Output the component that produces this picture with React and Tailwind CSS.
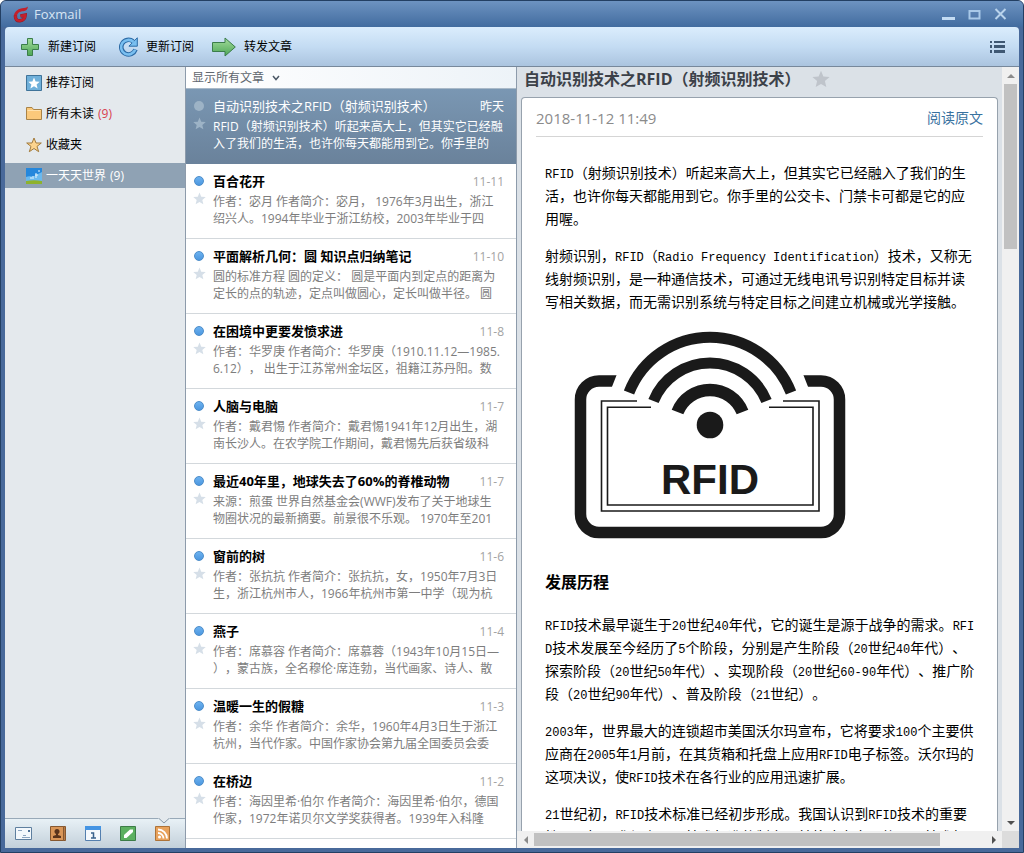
import { useState } from "react";

const folders = [
  { id: "recommend", name: "推荐订阅" },
  { id: "unread", name: "所有未读", count: 9, alert: true },
  { id: "favorite", name: "收藏夹" },
  { id: "world", name: "一天天世界", count: 9 },
];

const articles = [
  {
    title: "自动识别技术之RFID（射频识别技术）",
    date: "昨天",
    lines: ["RFID（射频识别技术）听起来高大上，但其实它已经融", "入了我们的生活，也许你每天都能用到它。你手里的"],
  },
  {
    title: "百合花开",
    date: "11-11",
    lines: ["作者：宓月 作者简介：宓月， 1976年3月出生，浙江", "绍兴人。1994年毕业于浙江纺校，2003年毕业于四"],
  },
  {
    title: "平面解析几何：圆 知识点归纳笔记",
    date: "11-10",
    lines: ["圆的标准方程 圆的定义： 圆是平面内到定点的距离为", "定长的点的轨迹，定点叫做圆心，定长叫做半径。 圆"],
  },
  {
    title: "在困境中更要发愤求进",
    date: "11-8",
    lines: ["作者：华罗庚 作者简介：华罗庚（1910.11.12—1985.", "6.12）， 出生于江苏常州金坛区，祖籍江苏丹阳。数"],
  },
  {
    title: "人脑与电脑",
    date: "11-7",
    lines: ["作者：戴君惕 作者简介：戴君惕1941年12月出生，湖", "南长沙人。在农学院工作期间，戴君惕先后获省级科"],
  },
  {
    title: "最近40年里，地球失去了60%的脊椎动物",
    date: "11-7",
    lines: ["来源：煎蛋 世界自然基金会(WWF)发布了关于地球生", "物圈状况的最新摘要。前景很不乐观。 1970年至201"],
  },
  {
    title: "窗前的树",
    date: "11-6",
    lines: ["作者：张抗抗 作者简介：张抗抗，女，1950年7月3日", "生，浙江杭州市人，1966年杭州市第一中学（现为杭"],
  },
  {
    title: "燕子",
    date: "11-4",
    lines: ["作者：席慕容 作者简介：席慕蓉（1943年10月15日—", "），蒙古族，全名穆伦·席连勃，当代画家、诗人、散"],
  },
  {
    title: "温暖一生的假糖",
    date: "11-3",
    lines: ["作者：余华 作者简介：余华，1960年4月3日生于浙江", "杭州，当代作家。中国作家协会第九届全国委员会委"],
  },
  {
    title: "在桥边",
    date: "11-2",
    lines: ["作者：海因里希·伯尔 作者简介：海因里希·伯尔，德国", "作家，1972年诺贝尔文学奖获得者。1939年入科隆"],
  },
];

const intro = [
  [
    "RFID（射频识别技术）听起来高大上，但其实它已经融入了我们的生",
    "活，也许你每天都能用到它。你手里的公交卡、门禁卡可都是它的应",
    "用喔。",
  ],
  [
    "射频识别，RFID（Radio Frequency Identification）技术，又称无",
    "线射频识别，是一种通信技术，可通过无线电讯号识别特定目标并读",
    "写相关数据，而无需识别系统与特定目标之间建立机械或光学接触。",
  ],
];

const history = [
  [
    "RFID技术最早诞生于20世纪40年代，它的诞生是源于战争的需求。RFI",
    "D技术发展至今经历了5个阶段，分别是产生阶段（20世纪40年代）、",
    "探索阶段（20世纪50年代）、实现阶段（20世纪60-90年代）、推广阶",
    "段（20世纪90年代）、普及阶段（21世纪）。",
  ],
  [
    "2003年，世界最大的连锁超市美国沃尔玛宣布，它将要求100个主要供",
    "应商在2005年1月前，在其货箱和托盘上应用RFID电子标签。沃尔玛的",
    "这项决议，使RFID技术在各行业的应用迅速扩展。",
  ],
  [
    "21世纪初，RFID技术标准已经初步形成。我国认识到RFID技术的重要",
    "性，国标要求与中RFID技术标准的制定，并将建立自己的RFID技术标",
  ],
];

const Star = ({ className }) => (
  <svg viewBox="0 0 24 24" className={className} fill="currentColor" aria-hidden="true">
    <path d="M12 1l3.2 7.6 8.3.7-6.3 5.4 1.9 8.1L12 18.500l-7.100 4.300 1.900-8.100L.5 9.300l8.300-.7z" />
  </svg>
);

const Logo = () => (
  <svg width="16" height="17" viewBox="0 0 16 17" fill="none" aria-hidden="true">
    <path d="M15 .5C13.500 2 12 2 9 2.300 4 3 .8 6.500.8 11L4 10C4.500 6.500 7 5.500 10.500 5.300 13 5 14.500 3.500 15 .5z" fill="#c3202b" />
    <path d="M2.500 9.500C2 13.500 4 15 7 14.700c3-.2 5-2 5.200-5.700L7.500 10" stroke="#8c1c2b" strokeWidth="3.400" />
    <path d="M2.500 9.500C2 13.500 4 15 7 14.700c3-.2 5-2 5.200-5.700L7.500 10" stroke="#c3202b" strokeWidth="2.600" />
  </svg>
);

const PlusIcon = () => (
  <svg width="20" height="20" viewBox="0 0 20 20" aria-hidden="true">
    <defs>
      <linearGradient id="green" x1="0" y1="0" x2="0" y2="1">
        <stop offset="0" stopColor="#a3dc9c" />
        <stop offset="1" stopColor="#4da656" />
      </linearGradient>
    </defs>
    <path d="M7.500 1.500h5v6h6v5h-6v6h-5v-6h-6v-5h6z" fill="url(#green)" stroke="#3b7d4a" />
  </svg>
);

const RefreshIcon = () => (
  <svg width="20" height="20" viewBox="0 0 20 20" fill="none" aria-hidden="true">
    <path d="M17.500 12.500A7.300 7.300 0 1 1 15 4.300" stroke="#2c6ba6" strokeWidth="4.600" />
    <path d="M19.300.8v8.400h-8.400z" fill="#79bff0" stroke="#2c6ba6" />
    <path d="M17.200 12.800A7.300 7.300 0 1 1 15.500 5" stroke="#79bff0" strokeWidth="2.600" />
  </svg>
);

const ForwardIcon = () => (
  <svg width="24" height="20" viewBox="0 0 24 20" aria-hidden="true">
    <path d="M.5 5.500h12.500V1L23.300 10 13 19V14.500H.5z" fill="url(#green)" stroke="#3b7d4a" />
  </svg>
);

const FolderIcon = ({ id }) => (
  <svg width="16" height="16" viewBox="0 0 16 16" className="shrink-0" aria-hidden="true">
    {id === "recommend" && (
      <>
        <path d="M.5.5h15v15H.5z" fill="#6fb0da" stroke="#3f7399" />
        <path d="M8 2.500l1.600 3.900 4.100.3-3.100 2.700 1 4.100L8 11.300l-3.600 2.200 1-4.100-3.100-2.700 4.100-.3z" fill="#fff" />
      </>
    )}
    {id === "unread" && (
      <>
        <path d="M.5 13.500v-12h5.500l1.500 2h8v10z" fill="#fbc97b" stroke="#a98347" />
        <path d="M1.500 4.500h13" stroke="#ffe2ae" />
      </>
    )}
    {id === "favorite" && (
      <path d="M8 1l2 5h5.300L11 9.400l1.700 5.300L8 11.500l-4.700 3.200L5 9.400.7 6H6z" fill="#fcd48e" stroke="#a17a3c" />
    )}
    {id === "world" && (
      <>
        <path d="M0 0h16v16H0z" fill="#2587dc" />
        <path d="M0 9c4-2 6 1 10-2l6-3v9H0z" fill="#6bb9ee" />
        <path d="M0 13c5-1 11-1 16 0v3H0z" fill="#8eb22c" />
        <path d="M4 10h2M7 8v3M10 5v5M9 7h3M12 3h2" stroke="#e8f6ff" fill="none" />
      </>
    )}
  </svg>
);

const modules = ["邮件", "联系人", "日程", "记事", "订阅"];

const ModuleIcon = ({ name }) => (
  <svg width="18" height="16" viewBox="0 0 18 16" aria-hidden="true">
    {name === "邮件" && (
      <>
        <path d="M.5 1.500h16v12H.5z" fill="#f3f8fc" stroke="#5e7f9f" />
        <path d="M3 4.500h4M8 9.500h3M7 11.500h8" stroke="#8aa4bf" />
        <path d="M13 4h2v2h-2z" fill="#4e7195" />
      </>
    )}
    {name === "联系人" && (
      <>
        <path d="M.5.5h13v14H.5z" fill="#d99658" stroke="#865830" />
        <path d="M13.500.5h2v14h-2z" fill="#b87a45" stroke="#865830" />
        <circle cx="7" cy="5.500" r="2.500" fill="#59331b" />
        <path d="M3 12V10l3-1V7h2v2l3 1v2z" fill="#59331b" />
      </>
    )}
    {name === "日程" && (
      <>
        <path d="M.5.5h15v14H.5z" fill="#f5f9fd" stroke="#547fae" />
        <path d="M0 0h16v4H0z" fill="#4494e3" />
        <path d="M6 7h2.500v5M6 12h5" stroke="#39628c" strokeWidth="1.500" fill="none" />
      </>
    )}
    {name === "记事" && (
      <>
        <path d="M.5.5h15v14H.5z" fill="#5cb060" stroke="#3c7c47" />
        <path d="M4 12V9l6-5.500h3v2.500L6.500 12z" fill="#fff" />
      </>
    )}
    {name === "订阅" && (
      <>
        <path d="M.5.5h14v14H.5z" fill="#e8a25c" stroke="#ad7339" />
        <circle cx="4.500" cy="11" r="1.500" fill="#fff" />
        <path d="M3 7a5.500 5.500 0 0 1 5.500 5.500M3 3.500a9 9 0 0 1 9 9" stroke="#fff" strokeWidth="1.800" fill="none" />
      </>
    )}
  </svg>
);

const RfidPicture = () => (
  <svg width="309" height="220" viewBox="1 6 309 220" className="ml-4 mt-3 block" fill="none" stroke="#1a1a1a" role="img" aria-label="RFID">
    <path d="M57 60H39a18.500 18.500 0 0 0-18.500 18.500V193A18.500 18.500 0 0 0 39 211.500H261a18.500 18.500 0 0 0 18.500-18.500V78.500A18.500 18.500 0 0 0 261 60H243" strokeWidth="11.500" />
    <path d="M57 53L51.500 67H59V53zM243 53l5.500 14H241V53z" fill="#fff" stroke="none" />
    <path d="M69 71.500A87 87 0 0 1 231 71.500" strokeWidth="11" />
    <path d="M93.500 80A61 61 0 0 1 206.500 80" strokeWidth="11" />
    <path d="M117.500 91A35 35 0 0 1 182.500 91" strokeWidth="12.500" />
    <circle cx="150" cy="104" r="13.300" fill="#1a1a1a" stroke="none" />
    <path d="M77 80H41.500V190H259V80H223M91 86.300H47.500V184H253V86.300H209" strokeWidth="1.600" />
    <text x="150" y="173" textAnchor="middle" fill="#1a1a1a" stroke="none" className="font-['Liberation_Sans',sans-serif] text-[42px] font-bold">
      RFID
    </text>
  </svg>
);

// Latin runs are set in a half-width face so they line up with the CJK grid
const Paragraph = ({ lines }) => (
  <p className="mb-[14px]">
    {lines.map((line) => (
      <span key={line} className="block whitespace-nowrap">
        {line.split(/([\x20-\x7e]+)/).map((part, i) =>
          i % 2 ? (
            <span key={i} className="font-['Liberation_Mono',monospace] text-[12px] leading-none">
              {part}
            </span>
          ) : (
            part
          )
        )}
      </span>
    ))}
  </p>
);

function Sidebar({ active, onSelect }) {
  return (
    <aside className="flex w-[181px] shrink-0 flex-col border-r border-[#8d9bab] bg-[#e4e9ed]">
      <nav className="flex flex-1 flex-col gap-[6px] pt-[3px]">
        {folders.map((folder) => (
          <button
            key={folder.id}
            onClick={() => onSelect(folder.id)}
            className={`flex h-[25px] items-center gap-1 pl-[21px] text-left ${
              active === folder.id ? "bg-[#8fa2b4] text-white" : "text-black"
            }`}
          >
            <FolderIcon id={folder.id} />
            <span>{folder.name}</span>
            {folder.count && <span className={folder.alert ? "text-[#d8404e]" : ""}>({folder.count})</span>}
          </button>
        ))}
      </nav>
      <div className="relative flex h-[30px] items-center gap-[17px] border-t border-[#98a9b8] bg-linear-to-b from-[#e8f1f6] to-[#c3d0da] pl-[10px]">
        {modules.map((name) => (
          <button key={name} aria-label={name}>
            <ModuleIcon name={name} />
          </button>
        ))}
        <svg width="12" height="6" viewBox="0 0 12 6" className="absolute -top-px left-[153px]" aria-hidden="true">
          <path d="M0 0h12L6 5z" fill="#e4e9ed" />
          <path d="M1 .5l5 4.500 5-4.500" fill="none" stroke="#8496a7" />
        </svg>
      </div>
    </aside>
  );
}

function ArticleList({ active, onSelect }) {
  return (
    <section className="flex w-[331px] shrink-0 flex-col border-r border-[#8d9bab] bg-white">
      <button className="flex h-[22px] shrink-0 items-center gap-2 border-b border-[#a9b9c8] bg-linear-to-r from-white to-[#edf3f8] pl-[6px] text-[#5f666e]">
        显示所有文章
        <svg width="8" height="6" viewBox="0 0 8 6" fill="none" stroke="#4c5866" strokeWidth="1.500" aria-hidden="true">
          <path d="M1 1l3 3.500L7 1" />
        </svg>
      </button>
      <ul className="min-h-0 flex-1 overflow-hidden">
        {articles.map((item, index) => {
          const selected = index === active;
          return (
            <li key={item.title} className={`border-b ${selected ? "border-[#6a829b]" : "border-[#d3d8dc]"}`}>
              <button
                onClick={() => onSelect(index)}
                className={`flex h-[74px] w-full gap-2 pl-[7px] pr-3 pt-[7px] text-left ${
                  selected ? "bg-linear-to-b from-[#7a97b3] to-[#6a829b] text-white" : "text-[#7d7d7d]"
                }`}
              >
                <span className="flex w-3 shrink-0 flex-col items-center gap-[6px] pt-[5px]">
                  <span
                    className={`size-[10px] rounded-full ${
                      selected ? "bg-[#9db3c6]" : "border border-[#4b8cc9] bg-linear-to-b from-[#6db2f0] to-[#4c97df]"
                    }`}
                  />
                  <Star className={`size-[13px] ${selected ? "text-[#9db3c6]" : "text-[#d6dfe8]"}`} />
                </span>
                <span className="min-w-0 flex-1 whitespace-nowrap leading-[17px]">
                  <span className="mb-[2px] flex h-5 items-center justify-between">
                    <span className={`text-[13px] ${selected ? "" : "font-bold text-black"}`}>{item.title}</span>
                    <span className={selected ? "" : "text-[#a3a3a3]"}>{item.date}</span>
                  </span>
                  {item.lines.map((line) => (
                    <span key={line} className="block">
                      {line}
                    </span>
                  ))}
                </span>
              </button>
            </li>
          );
        })}
      </ul>
    </section>
  );
}

function Reader() {
  return (
    <section className="flex min-w-0 flex-1 flex-col bg-[#dbe1e7]">
      <div className="flex min-h-0 flex-1">
        <div className="flex min-w-0 flex-1 flex-col overflow-hidden pl-1 pr-1">
          <header className="flex h-[30px] shrink-0 items-center gap-[11px] pb-[6px] pl-[3px]">
            <h1 className="whitespace-nowrap text-[16px] font-bold text-[#3c4149]">
              自动识别技术之RFID（射频识别技术）
            </h1>
            <button aria-label="收藏">
              <Star className="size-[18px] text-[#bfc4cb]" />
            </button>
          </header>
          <article className="min-h-0 flex-1 overflow-hidden rounded-t-sm border border-b-0 border-[#97a2ad] bg-white px-[14px]">
            <div className="flex h-[39px] items-center justify-between border-b border-[#d5d5d5] pt-[2px]">
              <time className="text-[15px] text-[#8b8b8b]">2018-11-12 11:49</time>
              <a href="#original" className="text-[14px] text-[#39729f]">
                阅读原文
              </a>
            </div>
            <div className="pl-[9px] pt-6 text-[14px] leading-[23px] text-black">
              {intro.map((lines) => (
                <Paragraph key={lines[0]} lines={lines} />
              ))}
              <RfidPicture />
              <h2 className="mb-[19px] mt-6 text-[16px] font-bold">发展历程</h2>
              {history.map((lines) => (
                <Paragraph key={lines[0]} lines={lines} />
              ))}
            </div>
          </article>
        </div>
        <div className="flex w-[17px] shrink-0 flex-col items-center bg-[#f0f0f0]">
          <span className="flex h-[17px] items-center">
            <span className="border-x-4 border-b-4 border-x-transparent border-b-[#8b8b8b]" />
          </span>
          <span className="h-[165px] w-[13px] bg-[#c1c1c1]" />
          <span className="mt-auto flex h-[17px] items-center">
            <span className="border-x-4 border-t-4 border-x-transparent border-t-[#505050]" />
          </span>
        </div>
      </div>
      <div className="flex h-[17px] shrink-0">
        <div className="flex flex-1 items-center bg-[#f0f0f0]">
          <span className="flex w-[17px] justify-center">
            <span className="border-y-4 border-r-4 border-y-transparent border-r-[#8b8b8b]" />
          </span>
          <span className="flex-1">
            <span className="block h-[13px] w-9/10 bg-[#c1c1c1]" />
          </span>
          <span className="flex w-[17px] justify-center">
            <span className="border-y-4 border-l-4 border-y-transparent border-l-[#505050]" />
          </span>
        </div>
        <div className="w-[17px] bg-[#dcdcdc]" />
      </div>
    </section>
  );
}

function App() {
  const [folder, setFolder] = useState("world");
  const [article, setArticle] = useState(0);

  return (
    <main className="flex h-screen flex-col overflow-hidden rounded-t-md border border-[#233f63] bg-[#48699a] px-1 pb-1 font-['Open_Sans','Noto_Sans_CJK_SC',sans-serif] text-[12px] leading-4 [text-spacing-trim:space-all]">
      <header className="-mx-1 flex h-[26px] shrink-0 items-center bg-linear-to-b from-[#6d93c1] to-[#426c9f] pl-3 pr-4 text-[#d7e5f4]">
        <Logo />
        <span className="ml-[5px] text-[13px]">Foxmail</span>
        <div className="ml-auto flex items-center gap-[13px]">
          <button aria-label="最小化">
            <svg width="13" height="12" viewBox="0 0 13 12" aria-hidden="true">
              <path d="M0 9h13v3H0z" fill="#c4dcf3" />
            </svg>
          </button>
          <button aria-label="最大化">
            <svg width="13" height="12" viewBox="0 0 13 12" aria-hidden="true">
              <path d="M1.500 3h10v7.500h-10z" fill="none" stroke="#a9c9e8" strokeWidth="2" />
            </svg>
          </button>
          <button aria-label="关闭">
            <svg width="13" height="12" viewBox="0 0 13 12" aria-hidden="true">
              <path d="M1.500 1l10 10M11.500 1l-10 10" stroke="#b9d3ec" strokeWidth="2" />
            </svg>
          </button>
        </div>
      </header>

      <div className="flex h-10 shrink-0 items-center rounded-t-sm border-b border-[#77889b] bg-linear-to-b from-[#dbedfc] via-[#c4dcf3] to-[#abc4df] pl-[15px] pr-[13px] text-black">
        <button className="flex items-center gap-2">
          <PlusIcon />
          新建订阅
        </button>
        <button className="ml-[22px] flex items-center gap-2">
          <RefreshIcon />
          更新订阅
        </button>
        <button className="ml-[18px] flex items-center gap-2">
          <ForwardIcon />
          转发文章
        </button>
        <button className="ml-auto" aria-label="菜单">
          <svg width="17" height="13" viewBox="0 0 17 13" fill="#3f5873" aria-hidden="true">
            <path d="M1 1h2v2H1zM5 1h11v2H5zM1 5h2v3H1zM5 5h11v3H5zM1 10h2v3H1zM5 10h11v3H5z" />
          </svg>
        </button>
      </div>

      <div className="flex min-h-0 flex-1">
        <Sidebar active={folder} onSelect={setFolder} />
        <ArticleList active={article} onSelect={setArticle} />
        <Reader />
      </div>
    </main>
  );
}

export default App;
